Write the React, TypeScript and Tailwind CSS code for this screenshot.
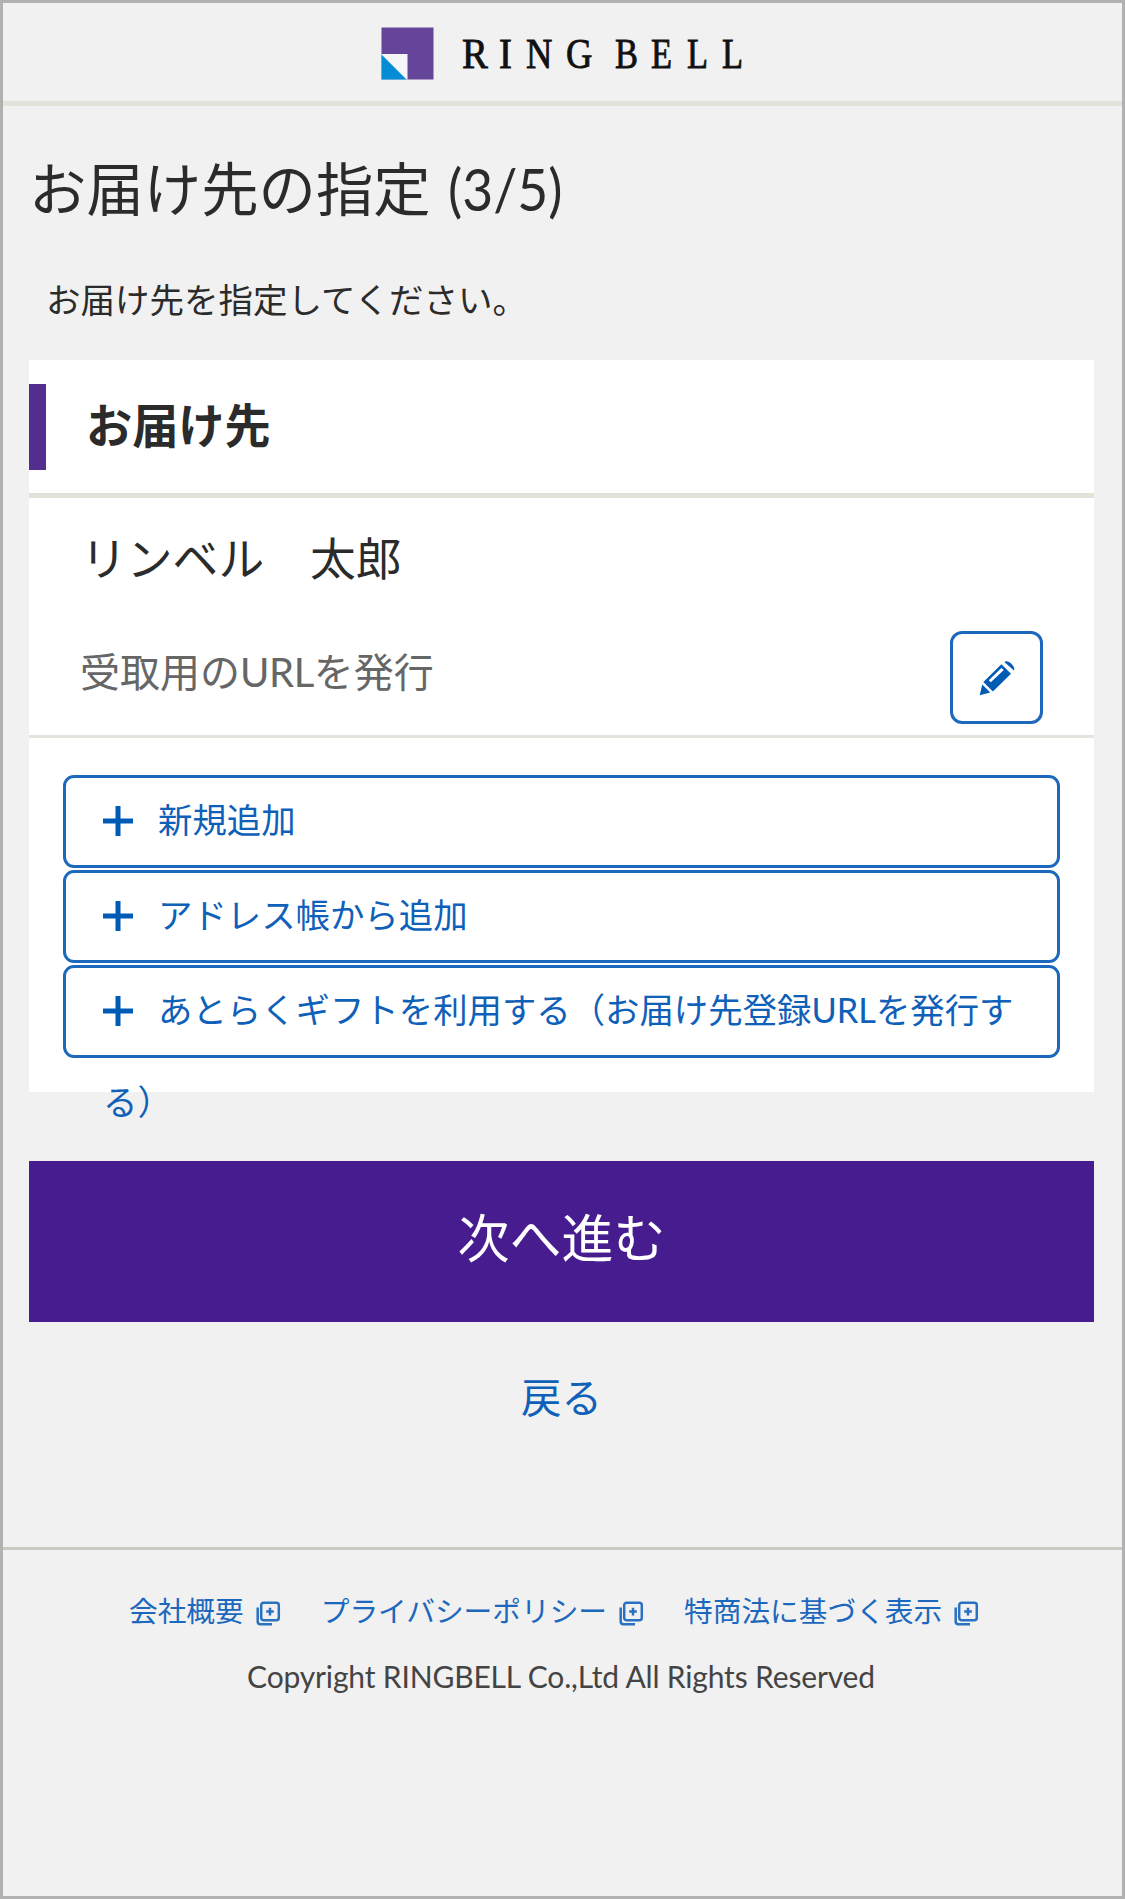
import React from "react";

function Logo() {
  return (
    <div className="flex h-[98px] items-center pl-[378px]">
      <svg width="53" height="53" viewBox="0 0 53 53" className="mt-[3px] shrink-0">
        <rect x="0.5" y="0.5" width="52" height="52" fill="#64459a" />
        <rect x="0.5" y="27" width="26" height="25.5" fill="#f4f6f8" />
        <path d="M0.5 27.5 L25.5 52.5 H0.5 Z" fill="#048dd4" />
      </svg>
      <div className="ml-[28px] mt-[3px] flex whitespace-nowrap font-['Liberation_Serif',serif] text-[43px] leading-[60px] text-[#111] [-webkit-text-stroke:0.9px_#111]">
        <span className="w-[37px] scale-x-90 origin-left">R</span>
        <span className="w-[27px] scale-x-90 origin-left">I</span>
        <span className="w-[40px] scale-x-85 origin-left">N</span>
        <span className="w-[49px] scale-x-85 origin-left">G</span>
        <span className="w-[36px] scale-x-80 origin-left">B</span>
        <span className="w-[36px] scale-x-80 origin-left">E</span>
        <span className="w-[35px] scale-x-80 origin-left">L</span>
        <span className="scale-x-80 origin-left">L</span>
      </div>
    </div>
  );
}

function PencilIcon() {
  return (
    <svg width="36" height="36" viewBox="0 0 36 36" fill="#005bb5">
      <path d="M25.4 1.9 C28.6 -1.2 37.2 6.6 34.9 10.6 Z" />
      <path fillRule="evenodd" d="M22.4 4.2 L32 13.8 L13.9 31.6 L4.4 22.1 Z M22.4 8 L9.8 20.2 L11.8 22.2 L24.8 10 Z" />
      <path d="M3.3 24.6 L11.2 32.5 L0.7 35.3 Z" />
    </svg>
  );
}

function PlusIcon() {
  return (
    <svg width="30" height="30" viewBox="0 0 30 30" className="mr-[25px] inline-block align-[-3px]">
      <path d="M0 15 H30 M15 0 V30" stroke="#005bb5" strokeWidth="5" />
    </svg>
  );
}

function NewWindowIcon() {
  return (
    <svg width="25" height="25" viewBox="0 0 25 25" fill="none" stroke="#2a71c2" strokeWidth="2.5">
      <rect x="5.2" y="1.7" width="17.6" height="17.6" rx="2.5" />
      <path d="M1.7 6.5 V20.5 Q1.7 23.2 4.4 23.2 H16" />
      <path d="M14 6.8 V14.4 M10.2 10.6 H17.8" />
    </svg>
  );
}

function AddButton({ label }: { label: string }) {
  return (
    <button className="block h-[93px] w-full rounded-[11px] border-3 border-[#1c68bd] pl-[37px] pr-[32px] text-left text-[34.4px] leading-[92px] text-[#0f60b8]">
      <span className="-mt-[4px] block">
        <PlusIcon />
        {label}
      </span>
    </button>
  );
}

function FooterLink({ label }: { label: string }) {
  return (
    <a className="flex items-center gap-[12px] text-[28.7px] leading-[40px] text-[#1c68be]">
      <span className="whitespace-nowrap">{label}</span>
      <span className="mt-[4px]">
        <NewWindowIcon />
      </span>
    </a>
  );
}

export default function App() {
  return (
    <div className="h-[1899px] w-[1125px] overflow-hidden border-[3px] border-[#b1b1b1] bg-[#f1f1f1] font-[Lato,'Noto_Sans_CJK_JP',sans-serif] text-[#2b2b2b]">
      <header className="h-[103px] border-b-[5px] border-[#e2e2d9]">
        <Logo />
      </header>

      <main className="pl-[26px] pr-[28px]">
        <h1 className="pt-[43px] text-[57.4px] leading-[80px]">
          お届け先の指定 <span className="ml-[3px] inline-block origin-left scale-x-[0.93]">(3/5)</span>
        </h1>
        <p className="ml-[17px] mt-[46px] text-[34.5px] leading-[50px]">お届け先を指定してください。</p>

        <section className="mt-[35px] h-[732px] bg-white">
          <div className="flex h-[138px] items-center border-b-[5px] border-[#e2e2d9]">
            <span className="h-[86px] w-[17px] bg-[#532e8e]" />
            <h2 className="-mt-[4px] ml-[40px] text-[46.2px] font-bold leading-[60px]">お届け先</h2>
          </div>
          <div className="flex h-[240px] items-start justify-between border-b-[3px] border-[#e5e4df] pr-[51px]">
            <div className="pl-[51px] pt-[31px]">
              <p className="pl-px text-[45.8px] leading-[60px]">リンベル　太郎</p>
              <p className="mt-[53px] text-[40px] leading-[60px] text-[#666]">
                受取用の<span className="tracking-[-0.4px]">URL</span>を発行
              </p>
            </div>
            <button className="mt-[133px] flex h-[93px] w-[93px] items-center justify-center rounded-[12px] border-[3px] border-[#1c68bd]">
              <PencilIcon />
            </button>
          </div>
          <div className="flex flex-col gap-[2px] px-[34px] pt-[37px]">
            <AddButton label="新規追加" />
            <AddButton label="アドレス帳から追加" />
            <AddButton label="あとらくギフトを利用する（お届け先登録URLを発行する）" />
          </div>
        </section>

        <button className="mt-[69px] block h-[161px] w-full bg-[#461c8f] pb-[7px] text-center text-[52px] leading-[150px] text-white">
          次へ進む
        </button>
        <a className="mt-[46px] block text-center text-[40.5px] leading-[60px] text-[#0f60b8]">戻る</a>
      </main>

      <footer className="mt-[119px] border-t-[3px] border-[#c9cac2]">
        <div className="flex gap-[40px] pl-[126px] pt-[41px]">
          <FooterLink label="会社概要" />
          <FooterLink label="プライバシーポリシー" />
          <FooterLink label="特商法に基づく表示" />
        </div>
        <p className="mt-[25px] pr-[3px] text-center text-[30px] leading-[40px] tracking-[-0.16px] text-[#444]">
          Copyright RINGBELL Co.,Ltd All Rights Reserved
        </p>
      </footer>
    </div>
  );
}
